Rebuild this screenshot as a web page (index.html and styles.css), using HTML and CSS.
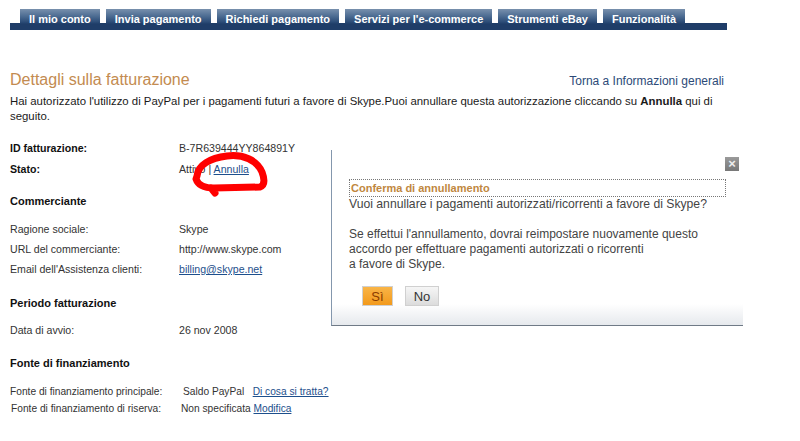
FILE: index.html
```html
<!DOCTYPE html>
<html lang="it">
  <head>
    <meta charset="UTF-8" />
    <meta name="viewport" content="width=device-width, initial-scale=1.0" />
    <title>Dettagli sulla fatturazione</title>
    <link rel="stylesheet" href="styles.css">
  </head>
  <body>
    <div class="page">
      <ul class="tabs">
        <li>Il mio conto</li>
        <li>Invia pagamento</li>
        <li>Richiedi pagamento</li>
        <li>Servizi per l'e-commerce</li>
        <li>Strumenti eBay</li>
        <li>Funzionalità</li>
      </ul>

      <div class="title-row">
        <h2>Dettagli sulla fatturazione</h2>
        <a href="#" class="back-link">Torna a Informazioni generali</a>
      </div>
      <p class="intro">
        Hai autorizzato l'utilizzo di PayPal per i pagamenti futuri a favore di Skype.Puoi annullare questa autorizzazione cliccando su <b>Annulla</b> qui di<br>seguito.
      </p>

      <div class="details">
        <div class="row strong first">
          <span class="label">ID fatturazione:</span>
          <span>B-7R639444YY864891Y</span>
        </div>
        <div class="row strong">
          <span class="label">Stato:</span>
          <span>Attivo | <a href="#">Annulla</a></span>
        </div>

        <h4 class="section">Commerciante</h4>
        <div class="row first-in-section">
          <span class="label">Ragione sociale:</span>
          <span>Skype</span>
        </div>
        <div class="row">
          <span class="label">URL del commerciante:</span>
          <span>http://www.skype.com</span>
        </div>
        <div class="row">
          <span class="label">Email dell'Assistenza clienti:</span>
          <span><a href="#">billing@skype.net</a></span>
        </div>

        <h4 class="section">Periodo fatturazione</h4>
        <div class="row date-row">
          <span class="label">Data di avvio:</span>
          <span>26 nov 2008</span>
        </div>

        <h4 class="section">Fonte di finanziamento</h4>
        <div class="row funding first-funding">
          <span class="label">Fonte di finanziamento principale:</span>
          <span class="shift4">Saldo PayPal &nbsp; <a href="#">Di cosa si tratta?</a></span>
        </div>
        <div class="row funding">
          <span class="label shift1">Fonte di finanziamento di riserva:</span>
          <span class="shift2">Non specificata <a href="#">Modifica</a></span>
        </div>
      </div>
    </div>

    <!-- hand-drawn red mark over "Annulla" -->
    <svg class="scribble" width="84" height="52" viewBox="0 0 84 52">
      <path d="M7 26 C8 15 20 8 37 6 C53 4 67 10 72 22 C75 30 75 35 70 37 L24 38 C14 38 8 35 6 29 Z M21 38 L25 43"
        fill="none" stroke="#f00" stroke-width="7" stroke-linecap="round" stroke-linejoin="round" />
    </svg>

    <div class="dialog">
      <span class="close">&times;</span>
      <div class="dialog-title">Conferma di annullamento</div>
      <p class="question">Vuoi annullare i pagamenti autorizzati/ricorrenti a favore di Skype?</p>
      <p class="warning">
        Se effettui l'annullamento, dovrai reimpostare nuovamente questo<br>
        accordo per effettuare pagamenti autorizzati o ricorrenti<br>
        a favore di Skype.
      </p>
      <div class="dialog-buttons">
        <button type="button" class="btn-yes">Sì</button>
        <button type="button" class="btn-no">No</button>
      </div>
    </div>
  </body>
</html>
```

FILE: styles.css
```css
body {
  margin: 0;
  background: #fff;
  font-family: "Liberation Sans", Arial, sans-serif;
  color: #222;
  position: relative;
}

a {
  color: #1d4f8c;
}

.page {
  width: 717px;
  padding-left: 10px;
}

.tabs {
  list-style: none;
  margin: 9px 0 0;
  padding: 0 0 0 10px;
  height: 21px;
  display: flex;
  gap: 6px;
  background: linear-gradient(to bottom, transparent 14px, #1f3d68 14px);
}

.tabs li {
  height: 21px;
  padding: 3px 9px 0;
  box-sizing: border-box;
  line-height: 14px;
  font-size: 11px;
  font-weight: bold;
  color: #fff;
  background: linear-gradient(to bottom, #7890ad 0, #4e6d93 7px, #2c4c77 13px, #1f3d68 15px);
}

.title-row {
  margin-top: 41px;
  display: flex;
  justify-content: space-between;
  align-items: baseline;
  padding-right: 3px;
}

.title-row h2 {
  margin: 0;
  font-size: 16px;
  line-height: 18px;
  font-weight: normal;
  color: #c38b50;
}

.back-link {
  font-size: 12px;
  color: #2c4a78;
  text-decoration: none;
}

.intro {
  margin: 5px 0 0;
  font-size: 11.4px;
  line-height: 15px;
  color: #1a1a1a;
}

.details {
  margin-top: 14px;
  font-size: 10.6px;
  color: #333;
}

.row {
  display: grid;
  grid-template-columns: 169px 1fr;
  line-height: 20px;
}

.row.strong {
  line-height: 21px;
}

.row.strong .label {
  font-weight: bold;
  color: #111;
}

.section {
  margin: 11px 0 0;
  font-size: 11px;
  line-height: 21px;
  color: #111;
}

.first-in-section {
  margin-top: 7px;
}

.details .section:nth-of-type(2) {
  margin-top: 14px;
}

.details .section:nth-of-type(3) {
  margin-top: 13px;
}

.date-row {
  margin-top: 6px;
}

.row.funding {
  font-size: 10.2px;
  line-height: 17px;
}

.first-funding {
  margin-top: 9px;
}

.shift1 {
  padding-left: 1px;
}

.shift2 {
  padding-left: 2px;
}

.shift4 {
  padding-left: 4px;
}

.scribble {
  position: absolute;
  left: 190px;
  top: 150px;
}

.dialog {
  position: absolute;
  left: 331px;
  top: 150px;
  width: 412px;
  height: 176px;
  box-sizing: border-box;
  padding: 29px 17px 0;
  background: linear-gradient(to bottom, #fff 154px, #e6e9ed 175px);
  border-left: 1px solid #8497ad;
  border-bottom: 1px solid #6f7a86;
  color: #444;
}

.close {
  position: absolute;
  right: 4px;
  top: 7px;
  width: 14px;
  height: 14px;
  background: linear-gradient(#9a9a9a, #777);
  color: #eee;
  font-size: 13px;
  line-height: 13px;
  text-align: center;
  font-weight: bold;
}

.dialog-title {
  width: 377px;
  height: 18px;
  box-sizing: border-box;
  border: 1px dotted #777;
  padding-left: 1px;
  font-size: 11px;
  line-height: 16px;
  font-weight: bold;
  color: #c0873e;
}

.question {
  margin: 0;
  font-size: 12.2px;
  line-height: 15px;
}

.warning {
  margin: 15px 0 0;
  font-size: 12px;
  line-height: 15px;
}

.dialog-buttons {
  margin: 14px 0 0 13px;
  display: flex;
  gap: 12px;
}

.dialog-buttons button {
  height: 20px;
  padding: 0;
  font-family: "Liberation Sans", Arial, sans-serif;
  font-size: 13px;
  border: 1px solid #d0d0d0;
}

.btn-yes {
  width: 31px;
  background: linear-gradient(#f9b547, #f29a1c);
  border-color: #e8951d;
  color: #8a3c00;
}

.btn-no {
  width: 34px;
  background: linear-gradient(#f6f6f6, #dcdcdc);
  color: #333;
}
```
